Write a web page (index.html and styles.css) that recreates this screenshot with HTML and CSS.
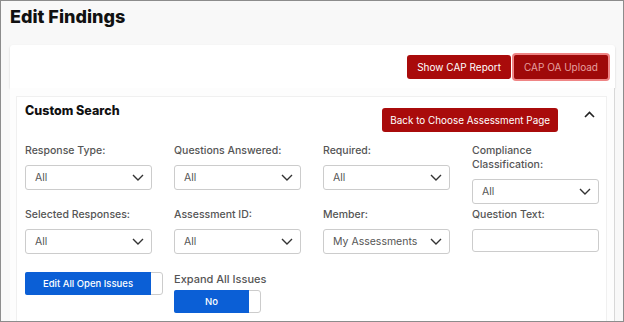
FILE: index.html
```html
<!DOCTYPE html>
<html lang="en">
<head>
    <meta charset="UTF-8">
    <meta name="viewport" content="width=device-width, initial-scale=1.0">
    <title>Edit Findings</title>
    <link rel="stylesheet" href="styles.css">
</head>
<body>
    <div class="frame">
        <h1>Edit Findings</h1>

        <!-- Report buttons -->
        <div class="top-card">
            <button class="btn-red">Show CAP Report</button>
            <button class="btn-red btn-focus">CAP OA Upload</button>
        </div>

        <div class="search-wrap">
            <div class="panel">
                <div class="panel-head">
                    <h2>Custom Search</h2>
                    <button class="btn-red btn-back">Back to Choose Assessment Page</button>
                    <span class="collapse">
                        <svg width="11" height="7" viewBox="0 0 11 7"><path d="M1 6 L5.5 1.5 L10 6" fill="none" stroke="#222" stroke-width="1.6"/></svg>
                    </span>
                </div>

                <!-- Filters -->
                <div class="filters">
                    <div class="field">
                        <label>Response Type:</label>
                        <div class="select"><span>All</span><svg width="12" height="7" viewBox="0 0 12 7"><path d="M1 1 L6 6 L11 1" fill="none" stroke="#333" stroke-width="1.4"/></svg></div>
                    </div>
                    <div class="field">
                        <label>Questions Answered:</label>
                        <div class="select"><span>All</span><svg width="12" height="7" viewBox="0 0 12 7"><path d="M1 1 L6 6 L11 1" fill="none" stroke="#333" stroke-width="1.4"/></svg></div>
                    </div>
                    <div class="field">
                        <label>Required:</label>
                        <div class="select"><span>All</span><svg width="12" height="7" viewBox="0 0 12 7"><path d="M1 1 L6 6 L11 1" fill="none" stroke="#333" stroke-width="1.4"/></svg></div>
                    </div>
                    <div class="field">
                        <label>Compliance<br>Classification:</label>
                        <div class="select"><span>All</span><svg width="12" height="7" viewBox="0 0 12 7"><path d="M1 1 L6 6 L11 1" fill="none" stroke="#333" stroke-width="1.4"/></svg></div>
                    </div>

                    <div class="field">
                        <label>Selected Responses:</label>
                        <div class="select"><span>All</span><svg width="12" height="7" viewBox="0 0 12 7"><path d="M1 1 L6 6 L11 1" fill="none" stroke="#333" stroke-width="1.4"/></svg></div>
                    </div>
                    <div class="field">
                        <label>Assessment ID:</label>
                        <div class="select"><span>All</span><svg width="12" height="7" viewBox="0 0 12 7"><path d="M1 1 L6 6 L11 1" fill="none" stroke="#333" stroke-width="1.4"/></svg></div>
                    </div>
                    <div class="field">
                        <label>Member:</label>
                        <div class="select"><span>My Assessments</span><svg width="12" height="7" viewBox="0 0 12 7"><path d="M1 1 L6 6 L11 1" fill="none" stroke="#333" stroke-width="1.4"/></svg></div>
                    </div>
                    <div class="field">
                        <label>Question Text:</label>
                        <div class="text-input"></div>
                    </div>
                </div>

                <!-- Toggles -->
                <div class="toggles">
                    <div class="toggle toggle-wide"><span class="toggle-on">Edit All Open Issues</span></div>
                    <div class="field">
                        <label>Expand All Issues</label>
                        <div class="toggle toggle-small"><span class="toggle-on">No</span></div>
                    </div>
                </div>
            </div>
        </div>
    </div>
</body>
</html>
```

FILE: styles.css
```css
* {
    box-sizing: border-box;
}
body {
    margin: 0;
    font-family: Inter, "Liberation Sans", sans-serif;
}
.frame {
    width: 624px;
    height: 322px;
    border: 1px solid #8c8c8c;
    background-color: #f8f8f8;
    overflow: hidden;
}
h1 {
    margin: 0;
    padding: 5px 0 0 9px;
    height: 44px;
    font-size: 18px;
    font-weight: 800;
    color: #111;
}
.top-card {
    margin: 0 8px 0 9px;
    height: 43px;
    background-color: #fff;
    border-radius: 3px 3px 0 0;
    box-shadow: 0 1px 2px rgba(0, 0, 0, 0.18);
    display: flex;
    justify-content: flex-end;
    align-items: center;
    gap: 3px;
    padding-right: 7px;
}
.btn-red {
    font-family: Inter, "Liberation Sans", sans-serif;
    background-color: #a90b0b;
    color: #fff;
    border: none;
    border-radius: 3px;
    height: 24px;
    padding: 0 10px;
    font-size: 10px;
    cursor: pointer;
}
.btn-focus {
    background-color: #9f0909;
    color: #e6a0a0;
    box-shadow: 0 0 0 2px #ef8585;
    border-radius: 2px;
    padding: 0 10px;
}
.search-wrap {
    margin: 0 8px 0 9px;
    height: 240px;
    background-color: #fdfdfd;
    padding: 8px 7px 0 6px;
    border-right: 1px solid #d8d8d8;
}
.panel {
    background-color: #fff;
    border: 1px solid #f0f0f0;
    height: 100%;
    padding: 0 7px 0 8px;
}
.panel-head {
    display: flex;
    align-items: flex-start;
    height: 47px;
}
h2 {
    flex: 1;
    margin: 6px 0 0 0;
    font-size: 12.5px;
    font-weight: 800;
    color: #111;
}
.btn-back {
    margin-top: 11px;
    padding: 0 8px;
    font-size: 9.9px;
}
.collapse {
    width: 20px;
    margin: 14px 0 0 21px;
    display: flex;
    justify-content: center;
}
.filters {
    display: grid;
    grid-template-columns: repeat(4, 127px);
    column-gap: 22px;
    row-gap: 4px;
}
.field label {
    display: block;
    font-size: 10.5px;
    line-height: 14px;
    font-weight: 500;
    color: #555;
    margin-bottom: 7px;
}
.select {
    height: 25px;
    border: 1px solid #ccc;
    border-radius: 3px;
    background-color: #fff;
    display: flex;
    align-items: center;
    justify-content: space-between;
    padding: 0 7px 0 9px;
    font-size: 10.5px;
    color: #555;
}
.text-input {
    height: 23px;
    border: 1px solid #ccc;
    border-radius: 3px;
}
.toggles {
    display: grid;
    grid-template-columns: 127px 127px;
    column-gap: 22px;
    margin-top: 18px;
}
.toggle {
    height: 23px;
    border: 1px solid #ccc;
    border-radius: 3px;
    background-color: #fff;
    display: flex;
}
.toggle-on {
    background-color: #0b5fd6;
    color: #fff;
    font-size: 9.5px;
    font-weight: 500;
    display: flex;
    align-items: center;
    justify-content: center;
    border-radius: 2px 0 0 2px;
    margin: -1px 0 -1px -1px;
}
.toggle-wide {
    width: 138px;
}
.toggle-wide .toggle-on {
    width: 126px;
}
.toggle-small {
    width: 87px;
}
.toggle-small .toggle-on {
    width: 75px;
}
.toggles .field label {
    font-size: 11px;
    margin-bottom: 4px;
}
```
